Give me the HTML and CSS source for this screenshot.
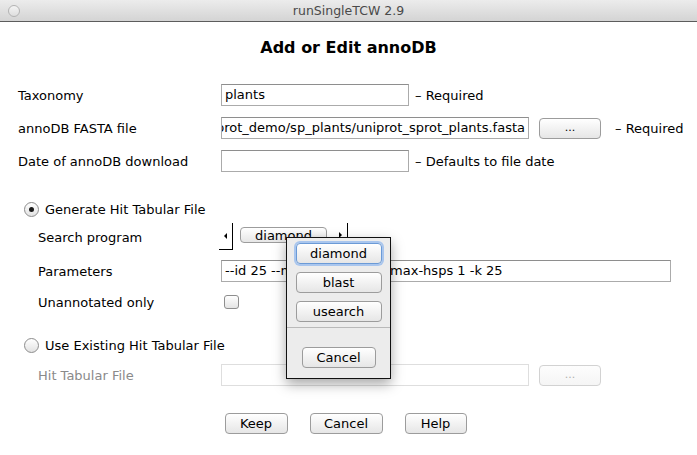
FILE: index.html
```html
<!DOCTYPE html>
<html>
<head>
<meta charset="utf-8">
<title>runSingleTCW 2.9</title>
<link rel="stylesheet" href="styles.css">
</head>
<body>
<div class="window">
  <div class="titlebar">
    <span class="close-dot"></span>
    <span class="title">runSingleTCW 2.9</span>
    <span></span>
  </div>
  <div class="dialog">
    <h1 class="heading">Add or Edit annoDB</h1>

    <div class="row r-tax">
      <span class="label">Taxonomy</span>
      <div class="field w-short">plants</div>
      <span class="note">– Required</span>
    </div>

    <div class="row r-fasta">
      <span class="label">annoDB FASTA file</span>
      <div class="field w-long"><span>/Users/tcw/projects/uniprot_demo/sp_plants/uniprot_sprot_plants.fasta</span></div>
      <div class="btn btn-browse">...</div>
      <span class="note note-far">– Required</span>
    </div>

    <div class="row r-date">
      <span class="label">Date of annoDB download</span>
      <div class="field w-short"></div>
      <span class="note">– Defaults to file date</span>
    </div>

    <div class="row radio-row r-gen">
      <span class="radio checked"></span>
      <span>Generate Hit Tabular File</span>
    </div>

    <div class="row sub r-search">
      <span class="label">Search program</span>
      <div class="spinner">
        <div class="spin-left"><span class="tri-left"></span></div>
        <div class="btn spin-btn">diamond</div>
        <div class="spin-right"><span class="tri-right"></span></div>
      </div>
    </div>

    <div class="row sub r-params">
      <span class="label">Parameters</span>
      <div class="field w-params">--id 25 --more-sensitive --max-hsps 1 -k 25</div>
    </div>

    <div class="row sub r-unann">
      <span class="label">Unannotated only</span>
      <span class="checkbox"></span>
    </div>

    <div class="row radio-row r-use">
      <span class="radio"></span>
      <span>Use Existing Hit Tabular File</span>
    </div>

    <div class="row sub r-hit">
      <span class="label disabled">Hit Tabular File</span>
      <div class="field w-long field-disabled"></div>
      <div class="btn btn-browse btn-disabled">...</div>
    </div>

    <div class="actions">
      <div class="btn act-keep">Keep</div>
      <div class="btn act-cancel">Cancel</div>
      <div class="btn act-help">Help</div>
    </div>
  </div>

  <div class="popup">
    <div class="btn pop-btn focused">diamond</div>
    <div class="btn pop-btn">blast</div>
    <div class="btn pop-btn">usearch</div>
    <div class="pop-sep"></div>
    <div class="btn pop-cancel">Cancel</div>
  </div>
</div>
</body>
</html>
```

FILE: styles.css
```css
* { box-sizing: border-box; }

body {
  margin: 0;
  width: 697px;
  height: 455px;
  overflow: hidden;
  background: #fff;
  color: #000;
  font-family: "DejaVu Sans", "Noto Sans", sans-serif;
  font-size: 13px;
}

.window {
  position: relative;
  height: 455px;
}

/* title bar */
.titlebar {
  height: 22px;
  display: grid;
  grid-template-columns: 1fr auto 1fr;
  align-items: center;
  background: linear-gradient(#ececec, #d4d4d4);
  border-bottom: 1px solid #5c5c5c;
}
.close-dot {
  margin-left: 8px;
  width: 12px;
  height: 12px;
  border-radius: 50%;
  border: 1px solid #b3b3b3;
  background: linear-gradient(#f4f4f4, #dedede);
}
.title {
  font-size: 12.5px;
  color: #4a4a4a;
}

/* dialog body */
.dialog {
  display: flex;
  flex-direction: column;
}
.heading {
  margin: 16px 0 0;
  height: 20px;
  line-height: 20px;
  font-size: 16px;
  font-weight: bold;
  text-align: center;
}

.row {
  display: flex;
  align-items: center;
  padding-left: 18px;
  white-space: nowrap;
}
.label {
  flex: none;
  width: 203px;
}
.sub .label {
  padding-left: 20px;
}
.label.disabled { color: #8a8a8a; }

.r-tax   { margin-top: 26px; height: 22px; }
.r-fasta { margin-top: 11px; height: 22px; }
.r-date  { margin-top: 11px; height: 22px; }
.r-gen   { margin-top: 29px; height: 16px; }
.r-search{ margin-top: 6px;  height: 28px; }
.r-params{ margin-top: 9px;  height: 22px; }
.r-unann { margin-top: 12px; height: 16px; }
.r-use   { margin-top: 27px; height: 16px; }
.r-hit   { margin-top: 11px; height: 22px; }

/* text fields */
.field {
  flex: none;
  height: 22px;
  line-height: 20px;
  padding: 0 3px;
  border: 1px solid #ababab;
  border-top-color: #8e8e8e;
  background: #fff;
  overflow: hidden;
  white-space: nowrap;
}
.w-short { width: 188px; }
.w-long {
  width: 308px;
  display: flex;
  justify-content: flex-end;
}
.w-params { width: 450px; }
.field-disabled {
  border-color: #dedede;
}

.note { margin-left: 6px; }
.note-far { margin-left: 14px; }

/* buttons */
.btn {
  flex: none;
  display: flex;
  align-items: center;
  justify-content: center;
  height: 21px;
  border: 1px solid #9c9c9c;
  border-radius: 4px;
  background: linear-gradient(#ffffff, #f1f1f1 55%, #e6e6e6);
  font-size: 13px;
  color: #000;
  white-space: nowrap;
}
.btn-browse {
  width: 62px;
  margin-left: 10px;
  font-size: 11px;
  padding-bottom: 2px;
}
.btn-disabled {
  border-color: #d2d2d2;
  color: #b0b0b0;
  background: linear-gradient(#fdfdfd, #f5f5f5);
}

/* radio & checkbox */
.radio-row {
  padding-left: 24px;
  gap: 6px;
}
.radio {
  flex: none;
  width: 15px;
  height: 15px;
  border-radius: 50%;
  border: 1px solid #8c8c8c;
  background: linear-gradient(#ffffff, #e2e2e2);
  display: flex;
  align-items: center;
  justify-content: center;
}
.radio.checked::after {
  content: "";
  width: 5px;
  height: 5px;
  border-radius: 50%;
  background: #1a1a1a;
}
.checkbox {
  flex: none;
  margin-left: 3px;
  width: 15px;
  height: 14px;
  border-radius: 3px;
  border: 1px solid #8e8e8e;
  background: linear-gradient(#ffffff, #e4e4e4);
}

/* spinner widget */
.spinner {
  display: flex;
  align-self: stretch;
  margin-left: -2px;
}
.spin-left {
  width: 14px;
  height: 27px;
  border-right: 1px solid #000;
  border-bottom: 1px solid #000;
  display: flex;
  align-items: center;
  justify-content: center;
}
.tri-left {
  width: 0;
  height: 0;
  border-top: 3px solid transparent;
  border-bottom: 3px solid transparent;
  border-right: 3px solid #000;
}
.spin-btn {
  margin: 4px 0 0 7px;
  width: 87px;
  height: 16px;
}
.spin-right {
  margin-left: 11px;
  width: 10px;
  height: 19px;
  border-right: 1px solid #000;
  display: flex;
  align-items: flex-end;
  padding: 0 0 4px 1px;
}
.tri-right {
  width: 0;
  height: 0;
  border-top: 3px solid transparent;
  border-bottom: 3px solid transparent;
  border-left: 3px solid #000;
}

/* bottom actions */
.actions {
  margin-top: 27px;
  display: flex;
  justify-content: center;
  gap: 22px;
  padding-right: 6px;
}
.act-keep { width: 63px; }
.act-cancel { width: 73px; }
.act-help { width: 62px; }

/* popup menu */
.popup {
  position: absolute;
  left: 286px;
  top: 237px;
  width: 105px;
  height: 142px;
  border: 1px solid #111;
  background: #ececec;
  box-shadow: 0 5px 12px rgba(0, 0, 0, 0.35);
  display: flex;
  flex-direction: column;
  align-items: center;
  padding-top: 5px;
}
.pop-btn {
  width: 86px;
  margin-bottom: 8px;
}
.pop-btn.focused {
  border-color: #6b9ad6;
  box-shadow: 0 0 0 2px #a9c6ee;
}
.pop-sep {
  align-self: stretch;
  height: 1px;
  background: #b9b9b9;
  margin-top: -3px;
}
.pop-cancel {
  width: 74px;
  margin-top: 19px;
}
```
